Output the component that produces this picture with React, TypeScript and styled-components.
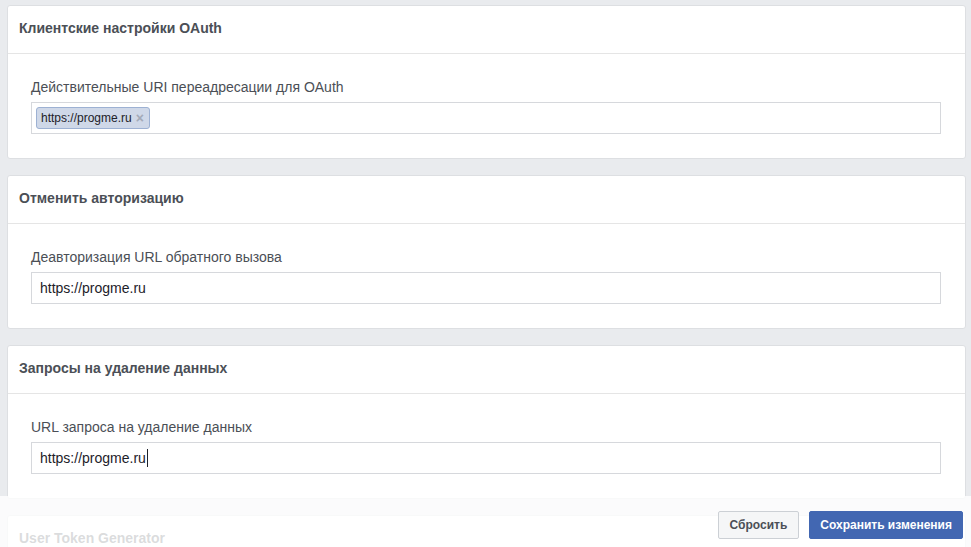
import React from 'react';
import styled, { createGlobalStyle } from 'styled-components';

const GlobalStyle = createGlobalStyle`
	html,
	body {
		margin: 0;
		padding: 0;
		background: #e9ebee;
		font-family: 'Liberation Sans', Arial, Helvetica, sans-serif;
		color: #1d2129;
		font-size: 12px;
	}
`;

interface Section {
	title: string;
	label?: string;
	value?: string;
	token?: boolean;
	focused?: boolean;
}

const sections: Section[] = [
	{
		title: 'Клиентские настройки OAuth',
		label: 'Действительные URI переадресации для OAuth',
		value: 'https://progme.ru',
		token: true,
	},
	{
		title: 'Отменить авторизацию',
		label: 'Деавторизация URL обратного вызова',
		value: 'https://progme.ru',
	},
	{
		title: 'Запросы на удаление данных',
		label: 'URL запроса на удаление данных',
		value: 'https://progme.ru',
		focused: true,
	},
	{
		title: 'User Token Generator',
	},
];

const App = () => {
	return (
		<>
			<GlobalStyle />
			<Page>
				{sections.map((s, i) => (
					<Card key={i}>
						<CardHeader>{s.title}</CardHeader>
						{s.label && (
							<CardBody>
								<FieldLabel>{s.label}</FieldLabel>
								<TextBox>
									{s.token ? (
										<Token>
											{s.value}
											<TokenRemove>×</TokenRemove>
										</Token>
									) : (
										<>
											{s.value}
											{s.focused && <Caret />}
										</>
									)}
								</TextBox>
							</CardBody>
						)}
						{!s.label && <EmptyBody />}
					</Card>
				))}
			</Page>
			<Footer>
				<Button>Сбросить</Button>
				<Button primary>Сохранить изменения</Button>
			</Footer>
		</>
	);
};

const Page = styled.main`
	display: flex;
	flex-direction: column;
	gap: 16px;
	padding: 5px 5px 60px 7px;
`;

const Card = styled.section`
	background: #fff;
	border: 1px solid #dddfe2;
	border-radius: 3px;
`;

const CardHeader = styled.div`
	display: flex;
	align-items: center;
	height: 44px;
	padding: 0 11px 3px;
	border-bottom: 1px solid #e5e5e5;
	font-size: 14px;
	font-weight: bold;
	color: #4b4f56;
`;

const CardBody = styled.div`
	display: flex;
	flex-direction: column;
	padding: 24px 24px 24px 23px;
`;

const EmptyBody = styled.div`
	height: 80px;
`;

const FieldLabel = styled.label`
	font-size: 14px;
	line-height: 18px;
	color: #4b4f56;
	margin-bottom: 6px;
`;

const TextBox = styled.div`
	display: flex;
	align-items: center;
	height: 30px;
	padding: 0 8px 0 4px;
	border: 1px solid #d6d8dc;
	font-size: 14px;
	color: #1d2129;
	text-indent: 4px;
`;

const Token = styled.span`
	display: inline-flex;
	align-items: center;
	height: 20px;
	padding: 0 5px 0 4px;
	text-indent: 0;
	background: #cfd8e8;
	border: 1px solid #9db1d3;
	border-radius: 3px;
	font-size: 12px;
	color: #1d2129;
`;

const TokenRemove = styled.span`
	margin-left: 4px;
	font-size: 14px;
	font-weight: bold;
	color: #a3aab8;
	line-height: 1;
`;

const Caret = styled.span`
	display: inline-block;
	width: 1px;
	height: 18px;
	margin-left: 1px;
	background: #1d2129;
`;

const Footer = styled.footer`
	position: fixed;
	left: 0;
	right: 0;
	bottom: 0;
	height: 51px;
	box-sizing: border-box;
	display: flex;
	justify-content: flex-end;
	align-items: flex-start;
	gap: 10px;
	padding: 15px 8px 8px;
	background: rgba(255, 255, 255, 0.8);
`;

const Button = styled.button<{ primary?: boolean }>`
	height: 28px;
	padding: 0 ${({ primary }) => (primary ? '10px' : '11px')};
	border-radius: 2px;
	font-family: 'Liberation Sans', Arial, Helvetica, sans-serif;
	font-size: 12px;
	font-weight: bold;
	cursor: pointer;
	border: 1px solid ${({ primary }) => (primary ? '#4267b2' : '#ccd0d5')};
	background: ${({ primary }) => (primary ? '#4267b2' : '#f5f6f7')};
	color: ${({ primary }) => (primary ? '#fff' : '#4b4f56')};
`;

export default App;
